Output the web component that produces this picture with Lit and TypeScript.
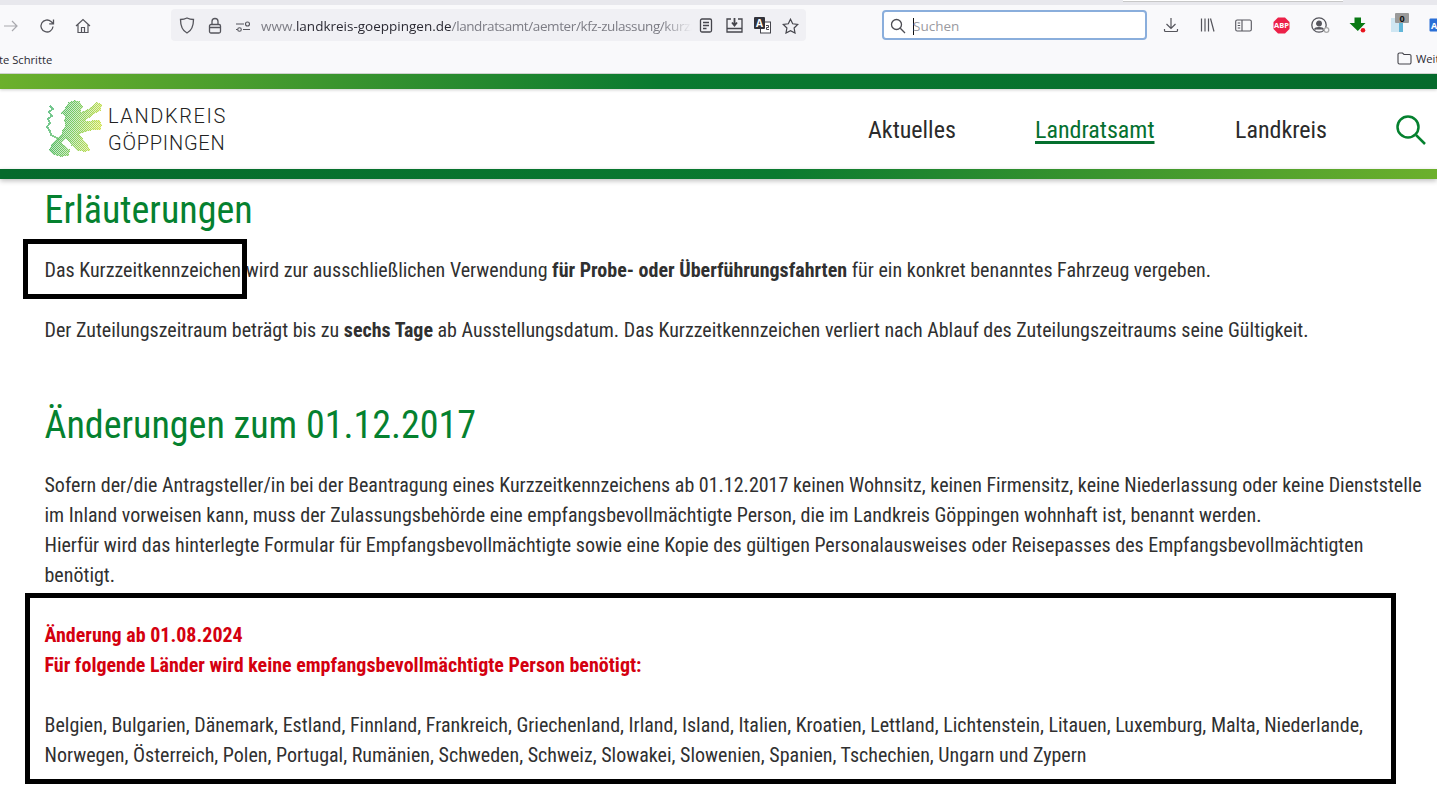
import { LitElement, html, css, svg } from "lit";
import { customElement } from "lit/decorators.js";

@customElement("app-root")
export class AppRoot extends LitElement {
  static styles = css`
    :host { display: block; position: relative; width: 1437px; height: 791px; overflow: hidden; background: #fff; font-family: Roboto, sans-serif; font-stretch: 75%; color: #303030; }
    svg { display: block; flex: none; }
    .chrome { height: 73px; background: #f9f9fb; border-bottom: 1px solid #cfd2cf; display: flex; flex-direction: column; position: relative; font-stretch: 100%; }
    .tabstrip { height: 5px; background: #e8e8ed; flex: none; }
    .tip { position: absolute; left: 1123px; top: 0; width: 220px; height: 1px; background: #fff; border-bottom: 1px solid #c8c8c8; }
    .toolbar { height: 36px; display: flex; align-items: center; flex: none; position: relative; }
    .urlbar { position: absolute; left: 171px; top: 4px; width: 635px; height: 32px; box-sizing: border-box; background: #f0f0f4; border-radius: 4px; display: flex; align-items: center; font: 13.5px "Open Sans", sans-serif; color: #7d7d85; overflow: hidden; padding-top: 2px; }
    .ticon { position: absolute; top: 13px; color: #55555c; }
    .urltext { position: absolute; left: 90px; white-space: nowrap; width: 431px; overflow: hidden; -webkit-mask-image: linear-gradient(90deg, #000 93%, transparent 100%); mask-image: linear-gradient(90deg, #000 93%, transparent 100%); }
    .urltext b { font-weight: 400; color: #2b2a33; }
    .urltext i { font-style: normal; letter-spacing: -.4px; }
    .search { position: absolute; left: 882px; top: 5px; width: 265px; height: 30px; box-sizing: border-box; background: #fff; border: 2px solid #8aaedc; border-radius: 4px; display: flex; align-items: center; font: 13.5px "Open Sans", sans-serif; color: #9a9aa0; padding: 2px 0 0 29px; }
    .caret { width: 1px; height: 17px; background: #111; margin-right: -1px; }
    .bookmarks { flex: 1; position: relative; font: 11.2px "Open Sans", sans-serif; color: #2b2a33; overflow: hidden; }
    .bm-left { position: absolute; left: -1px; top: 11px; }
    .bm-right { position: absolute; left: 1397px; top: 10px; display: flex; gap: 4px; align-items: center; white-space: nowrap; }
    .stripe { height: 15px; background: linear-gradient(90deg, #6cb02c 0%, #0a7a30 46%, #056a2c 100%); box-shadow: 0 1px 3px rgba(0,0,0,.2); }
    .head { height: 80px; display: flex; align-items: center; padding-left: 42px; position: relative; }
    .logo { display: flex; align-items: center; gap: 4px; }
    .logotext { font: 300 20px/27px Roboto, sans-serif; color: #222; white-space: nowrap; padding-top: 2px; }
    .l1 { letter-spacing: 1.6px; }
    .l2 { letter-spacing: .75px; }
    nav { margin-left: auto; display: flex; align-items: center; font-size: 24px; color: #2b2b2b; padding-top: 1px; }
    nav a { display: block; white-space: nowrap; }
    .n1 { width: 167px; }
    .n2 { width: 200px; color: #05702f; }
    .n2 span { text-decoration: underline; text-decoration-thickness: 2.5px; text-underline-offset: 3px; }
    .n3 { width: 161px; }
    .navsearch { margin-right: 11px; }
    .stripe2 { height: 10px; background: linear-gradient(90deg, #056a2c 0%, #0a7a30 54%, #6cb02c 100%); box-shadow: 0 2px 5px rgba(0,0,0,.25); }
    main { padding-left: 44.5px; width: 1392px; box-sizing: border-box; }
    h1 { margin: 0; font-weight: 400; font-size: 38px; line-height: 60px; color: #05812f; white-space: nowrap; padding-top: 1px; }
    p { margin: 0; font-size: 20px; line-height: 30px; white-space: nowrap; }
    b { font-weight: 700; }
    .mt15 { margin-top: 15px; }
    .mt30 { margin-top: 30px; }
    .mt49 { margin-top: 49px; }
    .mark { position: absolute; left: 23px; top: 239px; width: 224px; height: 60px; box-sizing: border-box; border: 5px solid #000; }
    .box { position: absolute; left: 25px; top: 593px; width: 1371px; height: 191px; box-sizing: border-box; border: 5px solid #000; padding: 22px 14.5px 0; }
    .red { color: #d4000f; font-weight: 700; }
  `;

  icons() {
    return svg`
      <svg class="ticon" style="left:3px;top:13px" width="16" height="16" viewBox="0 0 16 16" fill="none" stroke="#a9a9ae" stroke-width="1.2"><path d="M1 8h13M9 3l5 5-5 5"/></svg>
      <svg class="ticon" style="left:39px" width="16" height="16" viewBox="0 0 16 16" fill="none" stroke="#55555c" stroke-width="1.3"><path d="M14 8.500A6 6 0 1 1 12 3.500L14.300 5.500M14.500 1.500V5.800H10.200"/></svg>
      <svg class="ticon" style="left:75px" width="16" height="16" viewBox="0 0 16 16" fill="none" stroke="#55555c" stroke-width="1.2"><path d="M1 8l7-6.500 7 6.500M3 6.500V14.500h10V6.500M6.500 14.500V9.500h3v5"/></svg>
      <svg class="ticon" style="left:179px;top:12px" width="16" height="17" viewBox="0 0 16 17" fill="none" stroke="#55555c" stroke-width="1.300"><path d="M8 1c2 1 3.500 1.500 6.500 1.500C14.500 9 13 13.500 8 16 3 13.500 1.500 9 1.500 2.500 4.500 2.500 6 2 8 1z"/></svg>
      <svg class="ticon" style="left:208px;top:12px" width="14" height="17" viewBox="0 0 14 17" fill="none" stroke="#55555c" stroke-width="1.300"><rect x="1.500" y="7.500" width="11" height="8.500" rx="1.500"/><path d="M4 7.500V4.500a3 3 0 0 1 6 0v3M1.500 10.500h11"/></svg>
      <svg class="ticon" style="left:235px;top:16px" width="16" height="11" viewBox="0 0 16 11" fill="none" stroke="#55555c" stroke-width="1.100"><path d="M1 3h8M1 8.500h1.500M8 8.500h7"/><circle cx="12.500" cy="3" r="2"/><circle cx="4.500" cy="8.500" r="1.800"/></svg>
      <svg class="ticon" style="left:699px;top:13px" width="14" height="15" viewBox="0 0 14 15" fill="none" stroke="#45454c" stroke-width="1.300"><rect x="1.500" y="1" width="11" height="13" rx="1.500"/><path d="M4 4.500h6M4 7.500h6M4 10.500h3.500"/></svg>
      <svg class="ticon" style="left:726px;top:12px" width="17" height="16" viewBox="0 0 17 16" fill="none" stroke="#45454c" stroke-width="1.300"><path d="M5 2H1v13h15V2H12M1 11.500h15"/><path d="M8.500 1v7M6 5.500l2.500 3 2.500-3" stroke-width="1.800"/></svg>
      <svg class="ticon" style="left:754px;top:12px" width="17" height="17" viewBox="0 0 17 17">
        <rect x="6.500" y="5" width="10" height="11" fill="#fff" stroke="#45454c"/>
        <path d="M12 8.500h2.500v2h-2v2h2.500" fill="none" stroke="#45454c"/>
        <rect x="0" y="0" width="11" height="12" rx="1" fill="#33333a"/>
        <text x="5.500" y="10" font-size="10" font-weight="700" font-family="Open Sans" fill="#fff" text-anchor="middle">A</text>
      </svg>
      <svg class="ticon" style="left:782px;top:13px" width="17" height="16" viewBox="0 0 17 16" fill="none" stroke="#45454c" stroke-width="1.200"><path d="M8.500 1.200l2.200 4.600 5 .7-3.600 3.500.9 5-4.500-2.400-4.500 2.400.9-5L1.300 6.500l5-.7z"/></svg>
      <svg class="ticon" style="left:890px;top:13px" width="16" height="16" viewBox="0 0 16 16" fill="none" stroke="#4c4c52" stroke-width="1.300"><circle cx="6.500" cy="6.500" r="5"/><path d="M10.300 10.300L15 15"/></svg>
      <svg class="ticon" style="left:1163px;top:12px" width="16" height="16" viewBox="0 0 16 16" fill="none" stroke="#55555c" stroke-width="1.200"><path d="M8 1v10M3.500 7L8 11.500 12.500 7M1.500 12v1.500a1 1 0 0 0 1 1h11a1 1 0 0 0 1-1V12"/></svg>
      <svg class="ticon" style="left:1200px;top:13px" width="15" height="14" viewBox="0 0 15 14" fill="none" stroke="#55555c" stroke-width="1.200"><path d="M1.500 .5v13M5 .5v13M8.500 .5v13M10.500 .5l3.500 13"/></svg>
      <svg class="ticon" style="left:1235px;top:14px" width="17" height="13" viewBox="0 0 17 13" fill="none" stroke="#55555c" stroke-width="1.100"><rect x=".7" y="1" width="15.600" height="11" rx="1.500"/><path d="M7 1v11M2.700 4h2.500M2.700 6.500h2.500M2.700 9h2.500"/></svg>
      <svg class="ticon" style="left:1273px;top:12px" width="17" height="17" viewBox="0 0 17 17">
        <path d="M5 .5h7l4.500 4.500v7L12 16.500H5L.5 12V5z" fill="#ec2148"/>
        <text x="8.500" y="11.200" font-size="7.500" font-weight="700" font-family="Open Sans" fill="#fff" text-anchor="middle">ABP</text>
      </svg>
      <svg class="ticon" style="left:1311px;top:12px" width="19" height="17" viewBox="0 0 19 17" fill="none" stroke="#55555c" stroke-width="1.300"><circle cx="8" cy="8" r="7.200"/><circle cx="8" cy="6.500" r="2.300" fill="#55555c"/><path d="M3.500 12.500c1-2.500 8-2.500 9 0" fill="#55555c"/><circle cx="15.500" cy="13" r="2.300" fill="#f9f9fb" stroke="#aaa"/></svg>
      <svg class="ticon" style="left:1349px;top:12px" width="18" height="17" viewBox="0 0 18 17"><path d="M5.500 .5h6.500v5.500h4.500L8.800 14 .5 6h5z" fill="#0a7a15"/><circle cx="14" cy="13.200" r="2.300" fill="#e8141c"/></svg>
      <svg class="ticon" style="left:1391px;top:8px" width="18" height="20" viewBox="0 0 18 20"><path d="M0 5h12v14H0z" fill="#cfe6f2"/><path d="M8 5h4v14H8z" fill="#62b6d8"/><rect x="4" y="0" width="14" height="10" fill="#9a9a9a" rx="1"/><text x="11" y="8.500" font-size="9" font-weight="700" font-family="Open Sans" fill="#111" text-anchor="middle">0</text></svg>
      <svg class="ticon" style="left:1429px;top:13px" width="8" height="14" viewBox="0 0 8 14"><rect x=".5" y=".5" width="12" height="13" rx="1" fill="#2a6fd6"/><text x="5" y="10.500" font-size="9" font-weight="700" font-family="Open Sans" fill="#fff" text-anchor="middle">A</text></svg>
    `;
  }

  lion() {
    const body = "M24 10L27 5L33 3L37 4L40 9L38 12L39 15L46 12L52 8L55 5L59 7L58 12L52 15L47 19L42 22L45 24L52 23L57 23L59 27L58 31L52 31L44 33L38 35L36 36L40 41L45 47L47 52L43 53L36 52L30 47L27 42L24 40L18 45L22 48L27 52L26 57L19 58L12 56L8 52L10 47L15 42L20 37L21 33L24 28L23 22L24 18L20 15z";
    const tail = "M8 8L11 11L7 14L10 18L6 21L8 25L5 29L8 33L9 37L13 39L17 41";
    return svg`
      <svg width="62" height="62" viewBox="0 0 62 62" shape-rendering="crispEdges">
        <defs>
          <linearGradient id="lg" x1="0" y1=".3" x2="1" y2=".55"><stop offset="0" stop-color="#34ad68"/><stop offset=".5" stop-color="#7ccb66"/><stop offset="1" stop-color="#dbe64a"/></linearGradient>
          <pattern id="dots" width="2" height="2" patternUnits="userSpaceOnUse"><rect width="1" height="1" fill="#fff"/><rect x="1" y="1" width="1" height="1" fill="#fff"/></pattern>
          <mask id="lm" maskUnits="userSpaceOnUse" x="0" y="0" width="62" height="62">
            <path fill="#fff" fill-opacity=".35" stroke="#fff" stroke-opacity=".35" stroke-width="1.600" stroke-linejoin="round" d="${body}"/>
            <path fill="url(#dots)" stroke="url(#dots)" stroke-width="1.600" stroke-linejoin="round" d="${body}"/>
            <path fill="none" stroke="#fff" stroke-opacity=".75" stroke-width="1.800" d="${tail}"/>
          </mask>
        </defs>
        <rect width="62" height="62" fill="url(#lg)" mask="url(#lm)"/>
      </svg>`;
  }

  render() {
    return html`
      <div class="chrome">
        <div class="tabstrip"></div>
        <div class="tip"></div>
        <div class="toolbar">
          <div class="urlbar"><span class="urltext">www.<b>landkreis-goeppingen.de</b><i>/landratsamt/aemter/kfz-zulassung/kurzzeitkennzeichen</i></span></div>
          <div class="search"><span class="caret"></span>Suchen</div>
          ${this.icons()}
        </div>
        <div class="bookmarks">
          <span class="bm-left">te Schritte</span>
          <span class="bm-right"><svg width="15" height="13" viewBox="0 0 15 13" fill="none" stroke="#45454c" stroke-width="1.100"><path d="M1 2.500a1.500 1.500 0 0 1 1.500-1.500h3l1.500 1.500h5.500a1.500 1.500 0 0 1 1.500 1.500v6.500a1.500 1.500 0 0 1-1.500 1.500h-10a1.500 1.500 0 0 1-1.500-1.500z"/></svg>Weitere</span>
        </div>
      </div>
      <div class="stripe"></div>
      <header class="head">
        <div class="logo">${this.lion()}<div class="logotext"><span class="l1">LANDKREIS</span><br /><span class="l2">GÖPPINGEN</span></div></div>
        <nav>
          <a class="n1"><span>Aktuelles</span></a>
          <a class="n2"><span>Landratsamt</span></a>
          <a class="n3"><span>Landkreis</span></a>
          <svg class="navsearch" width="30" height="30" viewBox="0 0 30 30" fill="none" stroke="#05812f" stroke-width="2.500"><circle cx="12" cy="12" r="10.500"/><path d="M20 20l9 9"/></svg>
        </nav>
      </header>
      <div class="stripe2"></div>
      <main>
        <h1>Erläuterungen</h1>
        <p class="mt15">Das Kurzzeitkennzeichen wird zur ausschließlichen Verwendung <b>für Probe- oder Überführungsfahrten</b> für ein konkret benanntes Fahrzeug vergeben.</p>
        <p class="mt30">Der Zuteilungszeitraum beträgt bis zu <b>sechs Tage</b> ab Ausstellungsdatum. Das Kurzzeitkennzeichen verliert nach Ablauf des Zuteilungszeitraums seine Gültigkeit.</p>
        <h1 class="mt49">Änderungen zum 01.12.2017</h1>
        <p class="mt15">Sofern der/die Antragsteller/in bei der Beantragung eines Kurzzeitkennzeichens ab 01.12.2017 keinen Wohnsitz, keinen Firmensitz, keine Niederlassung oder keine Dienststelle</p>
        <p>im Inland vorweisen kann, muss der Zulassungsbehörde eine empfangsbevollmächtigte Person, die im Landkreis Göppingen wohnhaft ist, benannt werden.</p>
        <p>Hierfür wird das hinterlegte Formular für Empfangsbevollmächtigte sowie eine Kopie des gültigen Personalausweises oder Reisepasses des Empfangsbevollmächtigten</p>
        <p>benötigt.</p>
      </main>
      <div class="mark"></div>
      <div class="box">
        <p class="red">Änderung ab 01.08.2024</p>
        <p class="red">Für folgende Länder wird keine empfangsbevollmächtigte Person benötigt:</p>
        <p class="mt30">Belgien, Bulgarien, Dänemark, Estland, Finnland, Frankreich, Griechenland, Irland, Island, Italien, Kroatien, Lettland, Lichtenstein, Litauen, Luxemburg, Malta, Niederlande,</p>
        <p>Norwegen, Österreich, Polen, Portugal, Rumänien, Schweden, Schweiz, Slowakei, Slowenien, Spanien, Tschechien, Ungarn und Zypern</p>
      </div>
    `;
  }
}
